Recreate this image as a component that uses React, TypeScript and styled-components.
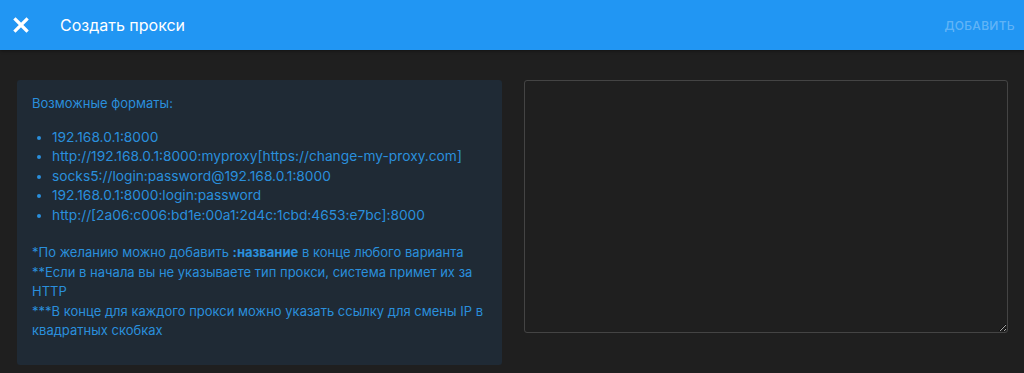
import React from "react";
import styled, { createGlobalStyle } from "styled-components";

const Global = createGlobalStyle`
  html, body { margin: 0; padding: 0; background: #1f1f1f; }
  body { font-family: Inter, "Noto Sans", sans-serif; }
  * { box-sizing: border-box; }
`;

const Page = styled.div`
  width: 1024px;
  height: 373px;
  background: #1f1f1f;
  overflow: hidden;
`;

const Header = styled.header`
  height: 50px;
  background: #2196f3;
  display: flex;
  align-items: center;
  padding: 0 9px 0 11px;
  box-shadow: 0 1px 3px rgba(0,0,0,0.4);
`;

const CloseButton = styled.button`
  width: 20px;
  height: 20px;
  padding: 0;
  border: 0;
  background: transparent;
  display: flex;
  align-items: center;
  justify-content: center;
  cursor: pointer;
`;

const Title = styled.h1`
  margin: 0 0 0 29px;
  font-size: 16px;
  font-weight: 400;
  color: #ffffff;
  flex: 1;
`;

const AddButton = styled.button`
  border: 0;
  background: transparent;
  color: rgba(255,255,255,0.3);
  font-family: inherit;
  font-size: 12px;
  font-weight: 500;
  letter-spacing: 0.3px;
  text-transform: uppercase;
  padding: 0;
`;

const Body = styled.main`
  display: grid;
  grid-template-columns: 485px 484px;
  column-gap: 22px;
  padding: 30px 16px 0 17px;
  align-items: start;
`;

const InfoPanel = styled.section`
  height: 285px;
  background: #1f2a35;
  border-radius: 3px;
  padding: 14px 15px;
  color: #2a8fdc;
  font-size: 13px;
  line-height: 19.6px;
`;

const Para = styled.p`
  margin: 0;
`;

const FormatList = styled.ul`
  margin: 14px 0 18px;
  padding-left: 20px;
  font-size: 13.75px;
  line-height: 19.5px;
`;

const Bold = styled.b`
  font-weight: 700;
`;

const ProxyInput = styled.textarea`
  width: 484px;
  height: 253px;
  background: transparent;
  border: 1px solid #444;
  border-radius: 3px;
  color: #ddd;
  resize: vertical;
  outline: none;
  font-family: inherit;
`;

const formats = [
  "192.168.0.1:8000",
  "http://192.168.0.1:8000:myproxy[https://change-my-proxy.com]",
  "socks5://login:password@192.168.0.1:8000",
  "192.168.0.1:8000:login:password",
  "http://[2a06:c006:bd1e:00a1:2d4c:1cbd:4653:e7bc]:8000",
];

export default function App() {
  return (
    <Page>
      <Global />
      <Header>
        <CloseButton aria-label="close">
          <svg width="16" height="16" viewBox="0 0 16 16">
            <path d="M2.5 2.5 L13.5 13.5 M13.5 2.5 L2.5 13.5" stroke="#fff" strokeWidth="3.2" strokeLinecap="square" />
          </svg>
        </CloseButton>
        <Title>Создать прокси</Title>
        <AddButton>Добавить</AddButton>
      </Header>
      <Body>
        <InfoPanel>
          <Para>Возможные форматы:</Para>
          <FormatList>
            {formats.map((f) => (
              <li key={f}>{f}</li>
            ))}
          </FormatList>
          <Para>
            *По желанию можно добавить <Bold>:название</Bold> в конце любого варианта
          </Para>
          <Para>**Если в начала вы не указываете тип прокси, система примет их за HTTP</Para>
          <Para>***В конце для каждого прокси можно указать ссылку для смены IP в квадратных скобках</Para>
        </InfoPanel>
        <ProxyInput />
      </Body>
    </Page>
  );
}
